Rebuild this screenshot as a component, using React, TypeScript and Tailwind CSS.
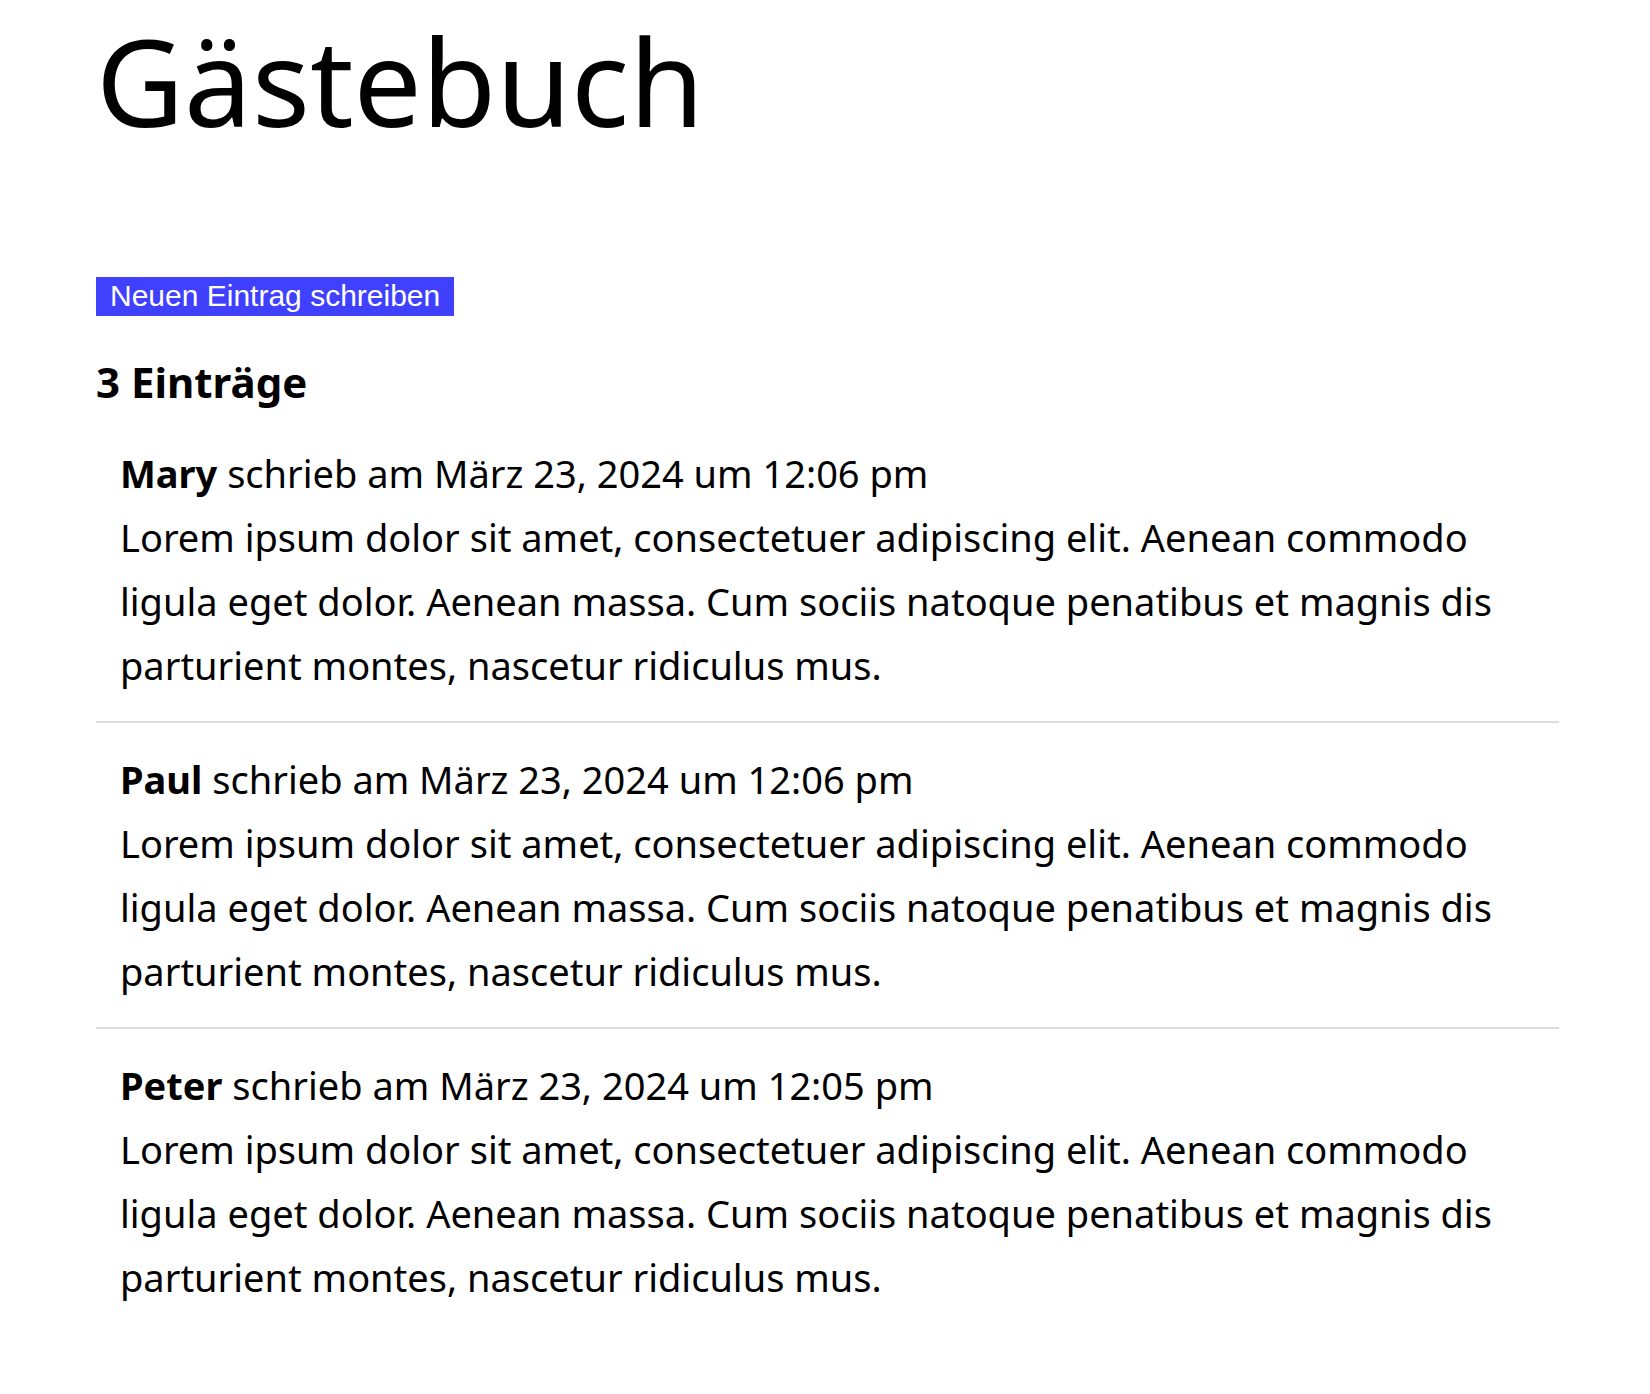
const entries = [
  { name: 'Mary', date: 'März 23, 2024 um 12:06 pm' },
  { name: 'Paul', date: 'März 23, 2024 um 12:06 pm' },
  { name: 'Peter', date: 'März 23, 2024 um 12:05 pm' },
];

const lorem =
  'Lorem ipsum dolor sit amet, consectetuer adipiscing elit. Aenean commodo ligula eget dolor. Aenean massa. Cum sociis natoque penatibus et magnis dis parturient montes, nascetur ridiculus mus.';

export default function App() {
  return (
    <div className="min-h-[1394px] bg-white pl-[96px] pr-[91px] text-black font-['Noto_Sans',sans-serif]">
      <h1 className="pt-[5px] text-[121px] leading-[1.25] font-normal">Gästebuch</h1>

      <button className="mt-[121px] block bg-[#4040ff] px-[14px] py-[2px] text-[30px] leading-[1.15] text-white font-['Liberation_Sans',Arial,sans-serif]">
        Neuen Eintrag schreiben
      </button>

      <h2 className="mt-[45px] text-[42px] leading-none font-bold">{entries.length} Einträge</h2>

      <div className="mt-[14px] divide-y-2 divide-[#dddddd]">
        {entries.map((entry, index) => (
          <div key={index} className="px-6 py-6 text-[38px] leading-[64px]">
            <p>
              <b className="font-bold">{entry.name}</b> schrieb am {entry.date}
            </p>
            <p>{lorem}</p>
          </div>
        ))}
      </div>
    </div>
  );
}
